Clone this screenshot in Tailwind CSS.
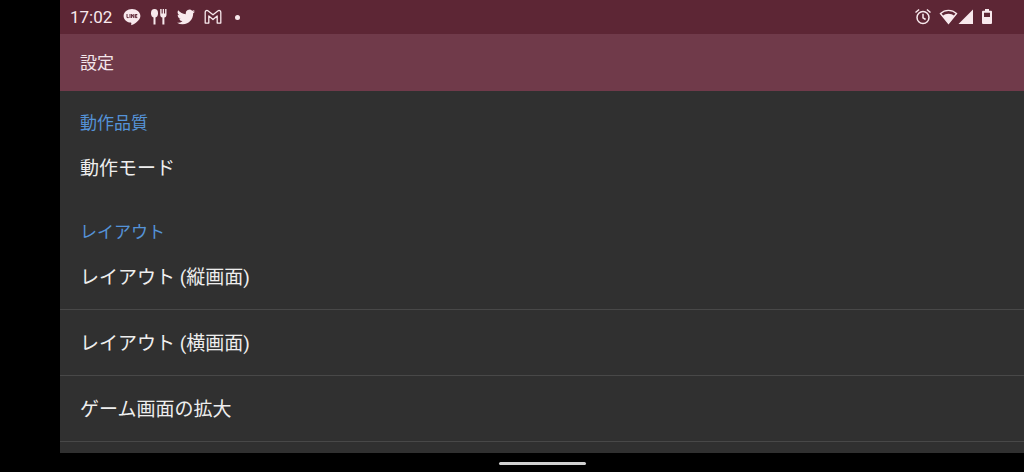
<!DOCTYPE html>
<html lang="ja">
<head>
<meta charset="utf-8">
<meta name="viewport" content="width=device-width, initial-scale=1">
<title>設定</title>
<script src="https://cdn.jsdelivr.net/npm/@tailwindcss/browser@4"></script>
</head>
<body class="flex h-screen flex-col overflow-hidden bg-black pl-[60px] font-['Roboto','Noto_Sans_CJK_JP',sans-serif] text-[#eeeeee]">
  <div class="flex h-[34px] shrink-0 items-center bg-[#5d2635] pl-2.5 pr-[31px] text-[#f8e9ed]">
    <time class="w-[53px] text-[17px] leading-6">17:02</time>
    <div class="flex items-center gap-[9px]">
      <svg class="h-[18px] w-[18px]" viewBox="0 0 18 18" role="img" aria-label="LINE">
        <path fill="currentColor" d="M9 1C4.400 1 .6 4 .6 7.900c0 3.500 3 6.200 7 6.700.9.200.8.700.6 2.200 0 .4.300.5.700.3C12 15.500 17.400 12 17.400 7.900 17.400 4 13.600 1 9 1z"/>
        <path fill="none" stroke="#5d2635" stroke-width="1" d="M4 6v3.600h1.700M7 6v4M8.600 10V6.200l2.200 3.500V6M14.300 6.500h-2v3.100h2M12.300 8h1.800"/>
      </svg>
      <svg class="h-[18px] w-[18px]" viewBox="0 0 18 18" role="img" aria-label="レストラン" fill="currentColor">
        <ellipse cx="4.500" cy="5.300" rx="3.500" ry="4.200"/>
        <path d="M3.500 8h2v8.600h-2zM10.200 1h1.400v4.500h1.100V1H14v4.500h1.100V1h1.400v5.700c0 1.600-.8 2.500-2.100 2.800v7.100h-2V9.500c-1.300-.3-2.200-1.200-2.200-2.800z"/>
      </svg>
      <svg class="h-[18px] w-[18px]" viewBox="0 0 24 24" role="img" aria-label="Twitter" fill="currentColor">
        <path d="M23.950 4.570a10 10 0 0 1-2.820.77 4.960 4.960 0 0 0 2.160-2.720c-.95.550-2 .95-3.130 1.180a4.920 4.920 0 0 0-8.380 4.480C7.690 8.090 4.070 6.130 1.640 3.160a4.920 4.920 0 0 0 1.520 6.570 4.900 4.900 0 0 1-2.230-.61v.06a4.920 4.920 0 0 0 3.950 4.830 5 5 0 0 1-2.210.08 4.940 4.940 0 0 0 4.600 3.420A9.870 9.870 0 0 1 0 19.540a13.990 13.990 0 0 0 7.550 2.210c9.050 0 14-7.500 14-13.980 0-.21 0-.42-.02-.63a9.940 9.940 0 0 0 2.420-2.570z"/>
      </svg>
      <svg class="h-[18px] w-[18px]" viewBox="0 0 18 18" role="img" aria-label="Gmail" fill="none" stroke="currentColor" stroke-width="1.300" stroke-linejoin="round">
        <path d="M1.200 4.300c0-1.800 1.800-2.300 3-1.400L9 6.800l4.800-3.900c1.200-.9 3-.4 3 1.400v10.800h-3.600V8L9 11.600 4.800 8v7.100H1.200z"/>
      </svg>
      <span class="ml-1 h-[5px] w-[5px] rounded-full bg-current"></span>
    </div>
    <div class="ml-auto flex items-center">
      <svg class="mr-[7px] h-[18px] w-[18px]" viewBox="0 0 18 18" role="img" aria-label="アラーム" fill="none" stroke="currentColor" stroke-width="1.500">
        <circle cx="9" cy="9.500" r="6"/><path d="M9 5.800v4l2.600 1.700M1.500 4.500l3.600-3M16.500 4.500l-3.600-3"/>
      </svg>
      <svg class="h-[18px] w-[19px]" viewBox="0 0 19 18" role="img" aria-label="Wi-Fi">
        <path fill="none" stroke="currentColor" stroke-width="1.400" d="M1.500 5.500C6 1.300 13 1.300 17.500 5.500L9.500 15.300z"/>
        <path fill="currentColor" d="M3.600 8C7 5 12 5 15.400 8l-5.900 7.500z"/>
      </svg>
      <svg class="h-[18px] w-4" viewBox="0 0 16 18" role="img" aria-label="電波" fill="currentColor"><path d="M15 1.500V16H.5z"/></svg>
      <svg class="ml-[7px] h-[18px] w-3" viewBox="0 0 12 18" role="img" aria-label="バッテリー">
        <path fill="currentColor" fill-rule="evenodd" d="M4 1h4v1.700h2q1 0 1 1V15q0 1-1 1H2q-1 0-1-1V3.700q0-1 1-1h2zM3 4.700V9h6V4.700z"/>
      </svg>
    </div>
  </div>
  <header class="flex h-[57px] shrink-0 items-center bg-[#703a4a] px-5">
    <h1 class="text-[17px] leading-6 text-[#f3e6ea]">設定</h1>
  </header>
  <main class="min-h-0 flex-1 overflow-hidden bg-[#303030]">
    <section>
      <h2 class="px-5 pt-5 text-[17px] leading-6 text-[#5593d8]">動作品質</h2>
      <button type="button" class="block w-full px-5 pt-[21px] pb-[19px] text-left text-[19px] leading-[25px]">動作モード</button>
    </section>
    <section>
      <h2 class="px-5 pt-5 text-[17px] leading-6 text-[#5593d8]">レイアウト</h2>
      <ul class="divide-y divide-[#484848] border-b border-[#484848]">
        <li><button type="button" class="block w-full px-5 pt-[21px] pb-[19px] text-left text-[19px] leading-[25px]">レイアウト (縦画面)</button></li>
        <li><button type="button" class="block w-full px-5 pt-[21px] pb-[19px] text-left text-[19px] leading-[25px]">レイアウト (横画面)</button></li>
        <li><button type="button" class="block w-full px-5 pt-[21px] pb-[19px] text-left text-[19px] leading-[25px]">ゲーム画面の拡大</button></li>
      </ul>
    </section>
  </main>
  <div class="flex h-[19px] shrink-0 items-center justify-center pt-0.5">
    <div class="h-[3px] w-[87px] rounded-full bg-[#d0d0d0]"></div>
  </div>
</body>
</html>
